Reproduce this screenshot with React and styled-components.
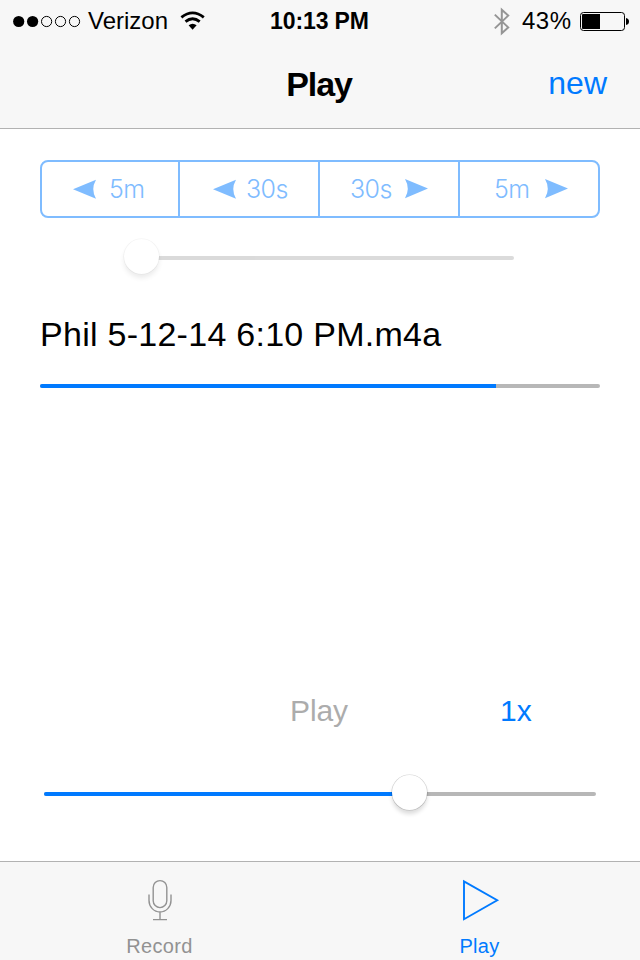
import React from "react";
import styled, { createGlobalStyle } from "styled-components";

const BLUE = "#007aff";
const PALE_BLUE = "#7fbcff";

const GlobalStyle = createGlobalStyle`
  * { box-sizing: border-box; }
  body { margin: 0; background: #fff; }
`;

const Screen = styled.div`
  width: 640px;
  height: 960px;
  display: flex;
  flex-direction: column;
  overflow: hidden;
  background: #fff;
  color: #000;
  font-family: "Liberation Sans", Arial, sans-serif;
`;

const TopChrome = styled.header`
  height: 129px;
  flex: none;
  background: #f7f7f7;
  border-bottom: 1px solid #b2b2b2;
`;

const StatusBar = styled.div`
  height: 40px;
  display: grid;
  grid-template-columns: 270px 100px 1fr;
  align-items: center;
  font-size: 24px;
  line-height: 40px;
  white-space: nowrap;
`;

const StatusGroup = styled.div`
  display: flex;
  align-items: center;
  justify-content: ${(p) => (p.$end ? "flex-end" : "flex-start")};
  padding-right: ${(p) => (p.$end ? 9 : 0)}px;
  height: 40px;
  svg { display: block; flex: none; }
`;

const Carrier = styled.span`
  width: 93px;
  padding-left: 1px;
  padding-top: 1px;
  letter-spacing: 0;
`;

const Clock = styled.span`
  font-weight: 700;
  font-size: 23px;
  padding-top: 1px;
  letter-spacing: -0.1px;
`;

const Percent = styled.span`
  width: 59px;
  padding-left: 2px;
  padding-top: 1px;
  letter-spacing: 0.5px;
`;

const NavBar = styled.div`
  height: 88px;
  display: grid;
  grid-template-columns: 1fr 200px 1fr;
  align-items: center;
  padding: 0 33px;
`;

const Title = styled.h1`
  grid-column: 2;
  margin: 0 2px 0 0;
  text-align: center;
  font-size: 34px;
  font-weight: 700;
  line-height: 40px;
  letter-spacing: -1.1px;
`;

const NavButton = styled.button`
  all: unset;
  justify-self: end;
  margin-top: -3px;
  color: ${BLUE};
  font-size: 32px;
  line-height: 40px;
  letter-spacing: 0;
`;

const Content = styled.main`
  flex: 1;
  display: flex;
  flex-direction: column;
  padding: 31px 40px 0;
`;

const Segments = styled.div`
  height: 58px;
  flex: none;
  display: grid;
  grid-template-columns: 138px 140px 140px 1fr;
  border: 2px solid ${PALE_BLUE};
  border-radius: 8px;
`;

const Segment = styled.button`
  all: unset;
  box-sizing: border-box;
  display: flex;
  align-items: center;
  padding-left: ${(p) => p.$inset}px;
  gap: ${(p) => p.$gap}px;
  color: ${PALE_BLUE};
  font-family: Inter, "Liberation Sans", sans-serif;
  font-weight: 300;
  font-size: 25px;
  letter-spacing: -0.6px;
  line-height: 54px;
  white-space: nowrap;
  border-right: ${(p) => (p.$last ? "0" : `2px solid ${PALE_BLUE}`)};
  svg { display: block; flex: none; }
`;

const Slider = styled.div`
  position: relative;
  flex: none;
  display: flex;
  align-items: center;
  width: ${(p) => p.$width}px;
  height: 36px;
  margin: ${(p) => p.$margin};
  opacity: ${(p) => (p.$disabled ? 0.5 : 1)};
`;

const Track = styled.div`
  width: 100%;
  height: 4px;
  border-radius: 2px;
  overflow: hidden;
  background: #b7b7b7;
`;

const Fill = styled.div`
  width: ${(p) => p.$amount}px;
  height: 100%;
  background: ${BLUE};
`;

const Knob = styled.div`
  position: absolute;
  left: ${(p) => p.$left}px;
  top: -1px;
  width: 35px;
  height: 35px;
  border-radius: 50%;
  background: #fff;
  box-shadow: 0 0 0 0.6px rgba(0, 0, 0, ${(p) => (p.$faint ? 0.1 : 0.18)}), 0 4px 4px rgba(0, 0, 0, 0.14);
`;

const FileName = styled.div`
  margin-top: 38px;
  height: 40px;
  font-size: 34px;
  line-height: 40px;
  letter-spacing: 0.27px;
  white-space: nowrap;
`;

const Progress = styled(Track)`
  margin-top: 30px;
  flex: none;
`;

const Controls = styled.div`
  display: grid;
  grid-template-columns: 210px 100px;
  justify-content: end;
  margin-top: 303px;
  height: 40px;
  font-size: 30px;
  line-height: 40px;
`;

const PlayButton = styled.button`
  all: unset;
  color: #acacac;
  letter-spacing: -0.1px;
`;

const RateButton = styled(PlayButton)`
  color: ${BLUE};
  letter-spacing: 0;
`;

const TabBar = styled.nav`
  height: 99px;
  flex: none;
  display: grid;
  grid-template-columns: 1fr 1fr;
  background: #f7f7f7;
  border-top: 1px solid #b2b2b2;
`;

const Tab = styled.button`
  all: unset;
  display: flex;
  flex-direction: column;
  align-items: center;
  padding-top: 16px;
  color: ${(p) => (p.$active ? BLUE : "#929292")};
  font-size: 20px;
  line-height: 24px;
  letter-spacing: 0.3px;
  svg { display: block; margin-bottom: 12px; }
`;

const TabLabel = styled.span`
  padding-right: 1px;
`;

const SignalDots = () => (
  <svg width="87" height="40" viewBox="0 0 87 40">
    {[18.7, 32.6, 46.6, 60.5, 74.5].map((x, i) => (
      <circle key={x} cx={x} cy="20.5" r={i < 2 ? 5.6 : 5.1}
        fill={i < 2 ? "#000" : "none"} stroke={i < 2 ? "none" : "#000"} strokeWidth="1" />
    ))}
  </svg>
);

const Wifi = () => (
  <svg width="26" height="40" viewBox="180 0 26 40">
    <path d="M181.4 16.4 Q192.6 7.4 203.8 16.4 M185.5 20.6 Q192.6 14.8 199.7 20.6" fill="none" stroke="#000" strokeWidth="2.8" />
    <path d="M188.6 24.3 Q192.6 21 196.6 24.3 L192.6 28.8 Z" fill="#000" />
  </svg>
);

const Bluetooth = () => (
  <svg width="30" height="40" viewBox="490 0 30 40">
    <path d="M494.8 13.6 L508.2 26.4 L501.8 32.3 V8.7 L508.2 14.6 L494.8 27.4" fill="none" stroke="#959595" strokeWidth="2" />
  </svg>
);

const Battery = () => (
  <svg width="52" height="40" viewBox="579 0 52 40">
    <rect x="580.5" y="11.5" width="44" height="18" rx="3" fill="none" stroke="#000" />
    <path d="M583 13 H600 V28 H583 Q582 28 582 27 V14 Q582 13 583 13Z" />
    <path d="M626 17 Q629 17.5 629 20.5 Q629 23.5 626 24Z" />
  </svg>
);

const Arrow = ({ back }) => (
  <svg width="23" height="20" viewBox="0 0 23 20">
    <path d={back ? "M0 10.3 L23 .8 Q17.5 10.3 23 19.8Z" : "M23 9.6 L0 0 Q5.5 9.6 0 19.2Z"} fill={PALE_BLUE} />
  </svg>
);

const Microphone = () => (
  <svg width="26" height="44" viewBox="0 0 26 44" fill="none" stroke="#929292" strokeWidth="1.4">
    <rect x="6.2" y="2.6" width="13.6" height="27" rx="6.8" />
    <path d="M2 16.5 V22.5 A11 11.5 0 0 0 24 22.5 V16.5 M13 34 V41.6 M6 41.6 H20" />
  </svg>
);

const Triangle = () => (
  <svg width="40" height="44" viewBox="0 0 40 44">
    <path d="M4 3.3 V41.2 L37.2 22.2Z" fill="none" stroke={BLUE} strokeWidth="1.9" />
  </svg>
);

export default function App() {
  return (
    <Screen>
      <GlobalStyle />
      <TopChrome>
        <StatusBar>
          <StatusGroup><SignalDots /><Carrier>Verizon</Carrier><Wifi /></StatusGroup>
          <Clock>10:13 PM</Clock>
          <StatusGroup $end><Bluetooth /><Percent>43%</Percent><Battery /></StatusGroup>
        </StatusBar>
        <NavBar><Title>Play</Title><NavButton>new</NavButton></NavBar>
      </TopChrome>
      <Content>
        <Segments>
          <Segment $inset={31} $gap={13}><Arrow back />5m</Segment>
          <Segment $inset={33} $gap={10}><Arrow back />30s</Segment>
          <Segment $inset={30} $gap={13}>30s<Arrow /></Segment>
          <Segment $inset={34} $gap={16} $last>5m<Arrow /></Segment>
        </Segments>
        <Slider $width={388} $margin="22px 0 0 86px" $disabled>
          <Track />
          <Knob $left={-2} $faint />
        </Slider>
        <FileName>Phil 5-12-14 6:10 PM.m4a</FileName>
        <Progress><Fill $amount={456} /></Progress>
        <Controls>
          <PlayButton>Play</PlayButton>
          <RateButton>1x</RateButton>
        </Controls>
        <Slider $width={552} $margin="45px 0 0 4px">
          <Track><Fill $amount={366} /></Track>
          <Knob $left={348} />
        </Slider>
      </Content>
      <TabBar>
        <Tab><Microphone /><TabLabel>Record</TabLabel></Tab>
        <Tab $active><Triangle /><TabLabel>Play</TabLabel></Tab>
      </TabBar>
    </Screen>
  );
}
